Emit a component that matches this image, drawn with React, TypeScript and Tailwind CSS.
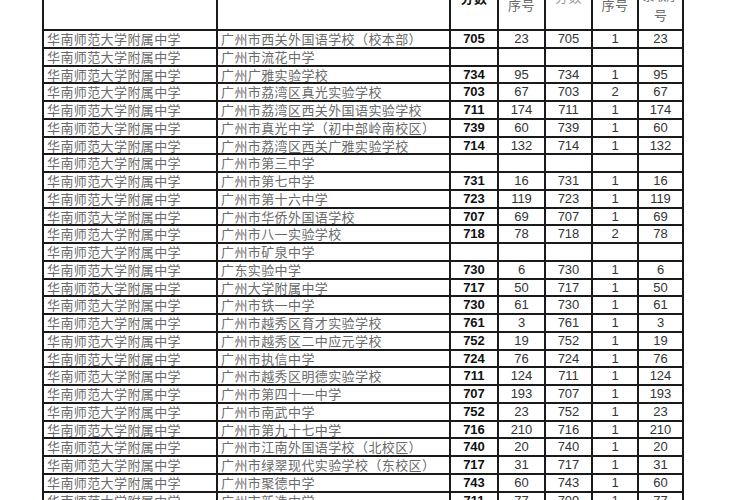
const rows: [string, string, string?, string?, string?, string?, string?][] = [
  ['华南师范大学附属中学', '广州市西关外国语学校（校本部）', '705', '23', '705', '1', '23'],
  ['华南师范大学附属中学', '广州市流花中学'],
  ['华南师范大学附属中学', '广州广雅实验学校', '734', '95', '734', '1', '95'],
  ['华南师范大学附属中学', '广州市荔湾区真光实验学校', '703', '67', '703', '2', '67'],
  ['华南师范大学附属中学', '广州市荔湾区西关外国语实验学校', '711', '174', '711', '1', '174'],
  ['华南师范大学附属中学', '广州市真光中学（初中部岭南校区）', '739', '60', '739', '1', '60'],
  ['华南师范大学附属中学', '广州市荔湾区西关广雅实验学校', '714', '132', '714', '1', '132'],
  ['华南师范大学附属中学', '广州市第三中学'],
  ['华南师范大学附属中学', '广州市第七中学', '731', '16', '731', '1', '16'],
  ['华南师范大学附属中学', '广州市第十六中学', '723', '119', '723', '1', '119'],
  ['华南师范大学附属中学', '广州市华侨外国语学校', '707', '69', '707', '1', '69'],
  ['华南师范大学附属中学', '广州市八一实验学校', '718', '78', '718', '2', '78'],
  ['华南师范大学附属中学', '广州市矿泉中学'],
  ['华南师范大学附属中学', '广东实验中学', '730', '6', '730', '1', '6'],
  ['华南师范大学附属中学', '广州大学附属中学', '717', '50', '717', '1', '50'],
  ['华南师范大学附属中学', '广州市铁一中学', '730', '61', '730', '1', '61'],
  ['华南师范大学附属中学', '广州市越秀区育才实验学校', '761', '3', '761', '1', '3'],
  ['华南师范大学附属中学', '广州市越秀区二中应元学校', '752', '19', '752', '1', '19'],
  ['华南师范大学附属中学', '广州市执信中学', '724', '76', '724', '1', '76'],
  ['华南师范大学附属中学', '广州市越秀区明德实验学校', '711', '124', '711', '1', '124'],
  ['华南师范大学附属中学', '广州市第四十一中学', '707', '193', '707', '1', '193'],
  ['华南师范大学附属中学', '广州市南武中学', '752', '23', '752', '1', '23'],
  ['华南师范大学附属中学', '广州市第九十七中学', '716', '210', '716', '1', '210'],
  ['华南师范大学附属中学', '广州市江南外国语学校（北校区）', '740', '20', '740', '1', '20'],
  ['华南师范大学附属中学', '广州市绿翠现代实验学校（东校区）', '717', '31', '717', '1', '31'],
  ['华南师范大学附属中学', '广州市聚德中学', '743', '60', '743', '1', '60'],
  ['华南师范大学附属中学', '广州市新造中学', '711', '77', '709', '1', '77'],
];

const grid = 'grid grid-cols-[174px_233px_48px_47px_47px_46px_45px]';
const cjk = "font-['Noto_Sans_CJK_SC',sans-serif] text-[13px] tracking-[0.4px] text-[#6a6a6a]";
const num = "font-['Liberation_Sans',Arial,sans-serif] text-[13px]";
const cell = 'border-r-2 border-[#1a1a1a] overflow-hidden';

export default function App() {
  return (
    <div className="h-[500px] w-[750px] overflow-hidden bg-white">
      <div className="ml-[42px] w-[642px] border-l-2 border-[#1a1a1a]">
        {/* header, cut off at the top of the scan */}
        <div className={`${grid} h-[31px] border-b-2 border-[#1a1a1a]`}>
          <div className={cell} />
          <div className={cell} />
          <div className={`${cell} flex flex-col items-center justify-end pb-[23px] leading-[16px] ${cjk} font-bold text-[#111]`}>
            <span>分数</span>
          </div>
          <div className={`${cell} flex flex-col items-center justify-end pb-[16px] leading-[16px] ${cjk}`}>
            <span>序号</span>
          </div>
          <div className={`${cell} flex flex-col items-center justify-end pb-[24px] leading-[16px] ${cjk} text-[#999]`}>
            <span>分数</span>
          </div>
          <div className={`${cell} flex flex-col items-center justify-end pb-[16px] leading-[16px] ${cjk}`}>
            <span>序号</span>
          </div>
          <div className={`${cell} flex flex-col items-center justify-end pb-[5px] leading-[19px] ${cjk} tracking-normal`}>
            <span className="text-[12px]">录取序</span>
            <span>号</span>
          </div>
        </div>

        {rows.map((r, i) => (
          <div key={i} className={`${grid} h-[17.76px] border-b-2 border-[#1a1a1a]`}>
            <div className={`${cell} flex items-center pl-[3px] whitespace-nowrap ${cjk}`}>{r[0]}</div>
            <div className={`${cell} flex items-center pl-[3px] whitespace-nowrap ${cjk}`}>{r[1]}</div>
            <div className={`${cell} flex items-center justify-center ${num} font-bold text-[#111]`}>{r[2]}</div>
            <div className={`${cell} flex items-center justify-center ${num} text-[#333]`}>{r[3]}</div>
            <div className={`${cell} flex items-center justify-center ${num} text-[#333]`}>{r[4]}</div>
            <div className={`${cell} flex items-center justify-center ${num} text-[#333]`}>{r[5]}</div>
            <div className={`${cell} flex items-center justify-center ${num} text-[#333]`}>{r[6]}</div>
          </div>
        ))}
      </div>
    </div>
  );
}
